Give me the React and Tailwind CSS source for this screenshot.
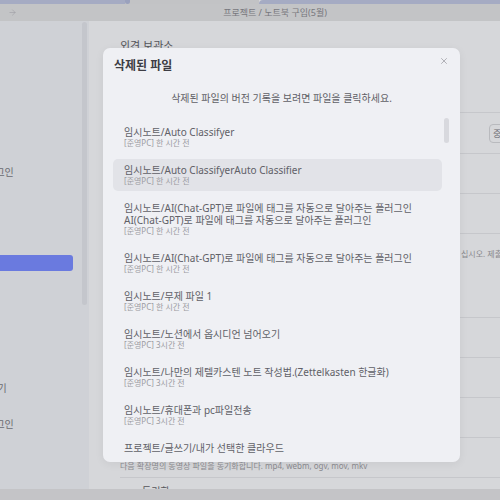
import { ArrowRight, X } from "lucide-react";

const files = [
  { name: "임시노트/Auto Classifyer", meta: "[준영PC] 한 시간 전" },
  { name: "임시노트/Auto ClassifyerAuto Classifier", meta: "[준영PC] 한 시간 전", active: true },
  {
    name: "임시노트/AI(Chat-GPT)로 파일에 태그를 자동으로 달아주는 플러그인 AI(Chat-GPT)로 파일에 태그를 자동으로 달아주는 플러그인",
    meta: "[준영PC] 한 시간 전",
  },
  { name: "임시노트/AI(Chat-GPT)로 파일에 태그를 자동으로 달아주는 플러그인", meta: "[준영PC] 한 시간 전" },
  { name: "임시노트/무제 파일 1", meta: "[준영PC] 한 시간 전" },
  { name: "임시노트/노션에서 옵시디언 넘어오기", meta: "[준영PC] 3시간 전" },
  { name: "임시노트/나만의 제텔카스텐 노트 작성법.(Zettelkasten 한글화)", meta: "[준영PC] 3시간 전" },
  { name: "임시노트/휴대폰과 pc파일전송", meta: "[준영PC] 3시간 전" },
  { name: "프로젝트/글쓰기/내가 선택한 클라우드", meta: "[준영PC] 3시간 전" },
];

function Sidebar() {
  return (
    <div className="relative w-[89px] shrink-0 bg-[#cfd1d6] overflow-hidden">
      <div className="absolute left-[82px] top-[1px] w-[5px] h-[283px] rounded-full bg-[#c4c6cc]" />
      <div className="flex flex-col text-[10px] leading-[14px] text-[#6a6a70] whitespace-nowrap">
        <div className="ml-[-23px] mt-[144px]">플러그인</div>
        <div className="mt-[76px] h-[16px] w-[73px] rounded-r-[3px] bg-[#6a7adf]" />
        <div className="ml-[-30px] mt-[110px]">넘어오기</div>
        <div className="ml-[-23px] mt-[22px]">플러그인</div>
      </div>
    </div>
  );
}

function Row({ h, children }) {
  return (
    <div className="border-b border-[#c6c7cb] relative" style={{ height: h }}>
      {children}
    </div>
  );
}

function MainPane() {
  return (
    <div className="flex-1 bg-[#d6d7da] overflow-hidden pl-[31px] relative">
      <div className="w-[420px]">
        <div className="h-[52px] pt-[18px] text-[11px] leading-[14px] text-[#55555b]">외견 보관소</div>
        <Row h={40} />
        <Row h={41}>
          <div className="absolute left-[369px] top-[11px] h-[19px] px-[3px] rounded-[4px] border border-[#b9babe] text-[9px] leading-[17px] text-[#6a6a70] whitespace-nowrap">
            중지
          </div>
        </Row>
        <Row h={40} />
        <Row h={40} />
        <Row h={84}>
          <div className="pl-[341px] pt-[14px] text-[8px] leading-[12px] text-[#8a8a8f] whitespace-nowrap">
            십시오. 제출하십시오.
          </div>
        </Row>
        <Row h={40} />
        <Row h={40} />
        <Row h={40} />
        <Row h={40}>
          <div className="pt-[22px] text-[8px] leading-[12px] text-[#8a8a8f] whitespace-nowrap">
            다음 확장명의 동영상 파일을 동기화합니다. mp4, webm, ogv, mov, mkv
          </div>
        </Row>
        <div className="pl-[22px] pt-[6px] text-[10px] leading-[14px] text-[#55555b]">동기화</div>
      </div>
    </div>
  );
}

function DeletedFilesModal() {
  return (
    <div className="absolute left-[103px] top-[48px] w-[357px] h-[414px] rounded-[7px] bg-[#eff0f4] flex flex-col overflow-hidden shadow-[0_2px_10px_rgba(0,0,0,0.06)]">
      <div className="relative px-[11px] pt-[10px] h-[26px]">
        <div className="text-[12px] leading-[16px] font-bold text-[#3d3d44]">삭제된 파일</div>
        <X className="absolute right-[11px] top-[8px] text-[#8b8b92]" size={10} strokeWidth={1.5} />
      </div>
      <div className="mt-[17px] text-center text-[10px] leading-[14px] text-[#5f5f66]">
        삭제된 파일의 버전 기록을 보려면 파일을 클릭하세요.
      </div>
      <div className="relative mt-[10px] h-[339px] overflow-hidden">
        <div className="absolute left-[341px] top-[3px] w-[5px] h-[25px] rounded-full bg-[#d8d9de]" />
        <div className="flex flex-col gap-[6px] pt-[6px] pl-[10px] w-[339px]">
          {files.map((f, i) => (
            <div
              key={i}
              className={
                "rounded-[5px] pl-[11px] pr-[8px] pt-[5px] pb-[5px] " + (f.active ? "bg-[#e2e3e8]" : "")
              }
            >
              <div className="text-[10px] leading-[12px] text-[#606067]">{f.name}</div>
              <div className="text-[8px] leading-[10px] text-[#9b9ba1]">{f.meta}</div>
            </div>
          ))}
        </div>
      </div>
    </div>
  );
}

export default function App() {
  return (
    <div
      className="relative w-[500px] h-[500px] overflow-hidden flex flex-col bg-[#d6d7da]"
      style={{ fontFamily: '"Noto Sans", "Noto Sans CJK KR", sans-serif' }}
    >
      <div className="h-[4px] flex shrink-0">
        <div className="w-[125px] bg-[#a5abc3]" />
        <div className="w-[5px] bg-[#c2c3c5] relative">
          <div className="w-[5px] h-[4px] rounded-b-full bg-[#9aa1bd]" />
        </div>
        <div className="w-[129px] bg-[#c2c3c5]" />
        <div className="flex-1 bg-[#a5abc3] rounded-tl-[4px]" />
      </div>
      <div className="h-[17px] shrink-0 bg-[#c3c4c6] flex items-center relative">
        <ArrowRight className="ml-[8px] text-[#9c9ca2]" size={9} strokeWidth={1.5} />
        <div className="absolute left-0 right-0 top-0 h-[17px] flex items-center justify-center pl-[50px] text-[9px] text-[#77777d]">
          프로젝트 / 노트북 구입(5월)
        </div>
      </div>
      <div className="flex-1 flex min-h-0">
        <Sidebar />
        <MainPane />
      </div>
      <div className="h-[11px] shrink-0 bg-[#c4c4c7]" />
      <DeletedFilesModal />
    </div>
  );
}
